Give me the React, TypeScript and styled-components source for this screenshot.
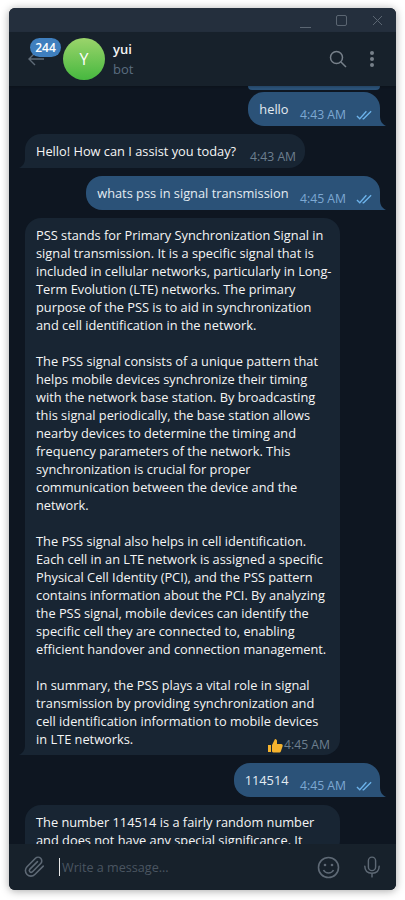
import React from "react";
import styled, { createGlobalStyle } from "styled-components";

const Global = createGlobalStyle`
  html, body { margin: 0; padding: 0; background: #fff; width: 405px; height: 900px; overflow: hidden; }
  * { box-sizing: border-box; }
`;
const Page = styled.div`
  width: 405px; height: 900px; padding: 8px 9px 10px;
  font-family: "Open Sans", sans-serif;
`;
const Win = styled.div`
  width: 387px; height: 882px; border-radius: 6px; overflow: hidden;
  display: flex; flex-direction: column; background: #0e1621;
  box-shadow: 0 1px 8px rgba(0,0,0,.35);
`;
const TitleBar = styled.div`
  height: 24px; flex: none; background: #242f3d; display: flex; justify-content: flex-end; align-items: center;
  color: #5b6672; padding-right: 13px; gap: 25px;
`;
const Header = styled.div`
  height: 54px; flex: none; background: #17212b; display: flex; align-items: center; position: relative;
  padding: 0 21px 0 54px; box-shadow: 0 1px 2px rgba(0,0,0,.2); z-index: 1;
`;
const Back = styled.svg`
  position: absolute; left: 19px; top: 20px; color: #5f6b77;
`;
const Badge = styled.div`
  position: absolute; left: 21px; top: 6px; height: 19px; width: 31px; border-radius: 10px;
  background: #3f7fbe; color: #fff; font-size: 12px; font-weight: 600; line-height: 19px; text-align: center;
`;
const Avatar = styled.div`
  width: 42px; height: 42px; border-radius: 50%; flex: none; margin-right: 8px;
  background: linear-gradient(180deg, #9bd46b, #46b83f); color: #fff; font-size: 16px; font-weight: 400;
  display: flex; align-items: center; justify-content: center;
`;
const Who = styled.div`
  flex: 1; display: flex; flex-direction: column;
`;
const Name = styled.div`
  color: #f5f5f5; font-size: 13px; font-weight: 600; line-height: 18px;
`;
const Status = styled.div`
  color: #5b6d80; font-size: 13px; line-height: 18px; margin-top: 2px;
`;
const HeadIcons = styled.div`
  display: flex; align-items: center; gap: 22px; color: #77808a;
`;
const Chat = styled.div`
  flex: 1; min-height: 0; overflow: hidden; display: flex; flex-direction: column; gap: 8px;
  padding: 0 16px;
`;
const Stub = styled.div`
  height: 4px; width: 132px; flex: none; align-self: flex-end; background: #2b5278;
  border-radius: 0 0 8px 8px; margin-bottom: -6px;
`;
const Bubble = styled.div<{ $out?: boolean; $w?: number }>`
  position: relative; flex: none; display: flex; flex-direction: column;
  align-self: ${p => (p.$out ? "flex-end" : "flex-start")};
  background: ${p => (p.$out ? "#2b5278" : "#182533")};
  color: ${p => (p.$out ? "#e4ecf2" : "#f5f5f5")};
  border-radius: ${p => (p.$out ? "16px 16px 0 16px" : "16px 16px 16px 0")};
  width: ${p => (p.$w ? `${p.$w}px` : "auto")};
  padding: 8px ${p => (p.$w ? "8px" : "11px")} 7px 11px; font-size: 12.8px; line-height: 18px;
`;
const Row = styled.div<{ $out?: boolean }>`
  display: flex; align-items: flex-start; justify-content: space-between; height: 19px; white-space: nowrap;
  gap: ${p => (p.$out ? "11.5px" : "14px")};
  margin-right: ${p => (p.$out ? "-4px" : "-2px")};
`;
const Para = styled.p`
  margin: 0 0 18px; &:last-of-type { margin-bottom: 0; }
`;
const Meta = styled.span<{ $out?: boolean }>`
  display: inline-flex; align-items: center; gap: 10px; font-size: 12.2px; line-height: 16px; white-space: nowrap;
  color: ${p => (p.$out ? "#7da8d3" : "#6d7f8f")}; margin-bottom: -4px; flex: none; align-self: flex-end;
`;
const EndMeta = styled(Meta)`
  gap: 1px; margin-top: -11px; margin-bottom: -5px; margin-right: 2px;
`;
const Tail = styled.svg<{ $out?: boolean }>`
  position: absolute; bottom: 0; width: 6px; height: 10px;
  ${p => (p.$out ? "right: -6px;" : "left: -6px; transform: scaleX(-1);")}
  fill: ${p => (p.$out ? "#2b5278" : "#182533")};
`;
const Composer = styled.div`
  height: 46px; flex: none; background: #17212b; display: flex; align-items: center; padding: 0 15px; color: #5e6975;
`;
const Input = styled.div`
  flex: 1; margin-left: 13px; display: flex; align-items: center; font-size: 12.6px; color: #4a5561; height: 20px;
`;
const Caret = styled.span`
  display: block; width: 1px; height: 18px; background: #e8e8e8; margin-right: 2px;
`;
const EmojiWrap = styled.div`
  margin-right: 23px; display: flex;
`;

const Check = () => (
  <svg width="17" height="10" viewBox="0 0 18 10" fill="none" stroke="#6cb2ea" strokeWidth="1.4">
    <path d="M1 6l3 3L11 1M7 9l1 0 8-8" />
  </svg>
);
const TailShape = ({ out }: { out?: boolean }) => (
  <Tail $out={out} viewBox="0 0 6 10"><path d="M0 0C0 5 2 8 6 10H0z" /></Tail>
);
const OutMsg = ({ text, time }: { text: string; time: string }) => (
  <Bubble $out>
    <Row $out><span>{text}</span><Meta $out>{time}<Check /></Meta></Row>
    <TailShape out />
  </Bubble>
);

export default function App() {
  return (
    <Page>
      <Global />
      <Win>
        <TitleBar>
          <svg width="11" height="11" viewBox="0 0 11 11" stroke="currentColor" fill="none" style={{ marginTop: 5 }}><path d="M0 10.5h11" /></svg>
          <svg width="11" height="11" viewBox="0 0 11 11" stroke="currentColor" fill="none"><rect x=".5" y=".5" width="10" height="10" rx="1.5" /></svg>
          <svg width="11" height="11" viewBox="0 0 11 11" stroke="currentColor" fill="none"><path d="M1 1l9 9M10 1l-9 9" /></svg>
        </TitleBar>
        <Header>
          <Back width="16" height="14" viewBox="0 0 16 14" fill="none" stroke="currentColor" strokeWidth="1.4"><path d="M7 1L1 7l6 6M1 7h15" /></Back>
          <Avatar>Y</Avatar>
          <Who><Name>yui</Name><Status>bot</Status></Who>
          <HeadIcons>
            <svg width="18" height="18" viewBox="0 0 18 18" fill="none" stroke="currentColor" strokeWidth="1.5"><circle cx="7.5" cy="7.5" r="6" /><path d="M12 12l5 5" /></svg>
            <svg width="6" height="18" viewBox="0 0 6 18" fill="currentColor"><circle cx="3" cy="3" r="2" /><circle cx="3" cy="9" r="2" /><circle cx="3" cy="15" r="2" /></svg>
          </HeadIcons>
          <Badge>244</Badge>
        </Header>
        <Chat>
          <Stub />
          <OutMsg text="hello" time="4:43 AM" />
          <Bubble>
            <Row><span>Hello! How can I assist you today?</span><Meta>4:43 AM</Meta></Row>
            <TailShape />
          </Bubble>
          <OutMsg text="whats pss in signal transmission" time="4:45 AM" />
          <Bubble $w={315}>
            <Para>PSS stands for Primary Synchronization Signal in signal transmission. It is a specific signal that is included in cellular networks, particularly in Long-Term Evolution (LTE) networks. The primary purpose of the PSS is to aid in synchronization and cell identification in the network.</Para>
            <Para>The PSS signal consists of a unique pattern that helps mobile devices synchronize their timing with the network base station. By broadcasting this signal periodically, the base station allows nearby devices to determine the timing and frequency parameters of the network. This synchronization is crucial for proper communication between the device and the network.</Para>
            <Para>The PSS signal also helps in cell identification. Each cell in an LTE network is assigned a specific Physical Cell Identity (PCI), and the PSS pattern contains information about the PCI. By analyzing the PSS signal, mobile devices can identify the specific cell they are connected to, enabling efficient handover and connection management.</Para>
            <Para>In summary, the PSS plays a vital role in signal transmission by providing synchronization and cell identification information to mobile devices in LTE networks.</Para>
            <EndMeta>
              <svg width="16" height="15" viewBox="0 0 16 15"><path fill="#f5b32e" d="M1 7h3v7H1zM5 7l3-6c1.500 0 2 1 2 2v3h4c1.500 0 2 1 1.500 2.500l-1.500 4.500c-.3 1-1 1.500-2 1.500H7c-1 0-2-.5-2-1z" /></svg>
              4:45 AM
            </EndMeta>
            <TailShape />
          </Bubble>
          <OutMsg text="114514" time="4:45 AM" />
          <Bubble $w={315}>
            <Para>The number 114514 is a fairly random number and does not have any special significance. It</Para>
          </Bubble>
        </Chat>
        <Composer>
          <svg width="22" height="22" viewBox="0 0 24 24" fill="none" stroke="currentColor" strokeWidth="1.7" strokeLinecap="round"><path d="M21 11l-9.200 9.200a6 6 0 0 1-8.500-8.500l9.200-9.200a4 4 0 0 1 5.700 5.700l-9.200 9.200a2 2 0 0 1-2.800-2.800l8.500-8.500" /></svg>
          <Input><Caret />Write a message...</Input>
          <EmojiWrap>
            <svg width="23" height="23" viewBox="0 0 23 23" fill="none" stroke="currentColor" strokeWidth="1.6"><circle cx="11.500" cy="11.500" r="10" /><circle cx="8" cy="9" r="1.300" fill="currentColor" stroke="none" /><circle cx="15" cy="9" r="1.300" fill="currentColor" stroke="none" /><path d="M6.500 14c1 2 3 3 5 3s4-1 5-3" /></svg>
          </EmojiWrap>
          <svg width="18" height="22" viewBox="0 0 20 24" fill="none" stroke="currentColor" strokeWidth="1.6" strokeLinecap="round"><rect x="6" y="1" width="8" height="15" rx="4" /><path d="M2 11c0 5 3 8 8 8s8-3 8-8M10 19v4" /></svg>
        </Composer>
      </Win>
    </Page>
  );
}
